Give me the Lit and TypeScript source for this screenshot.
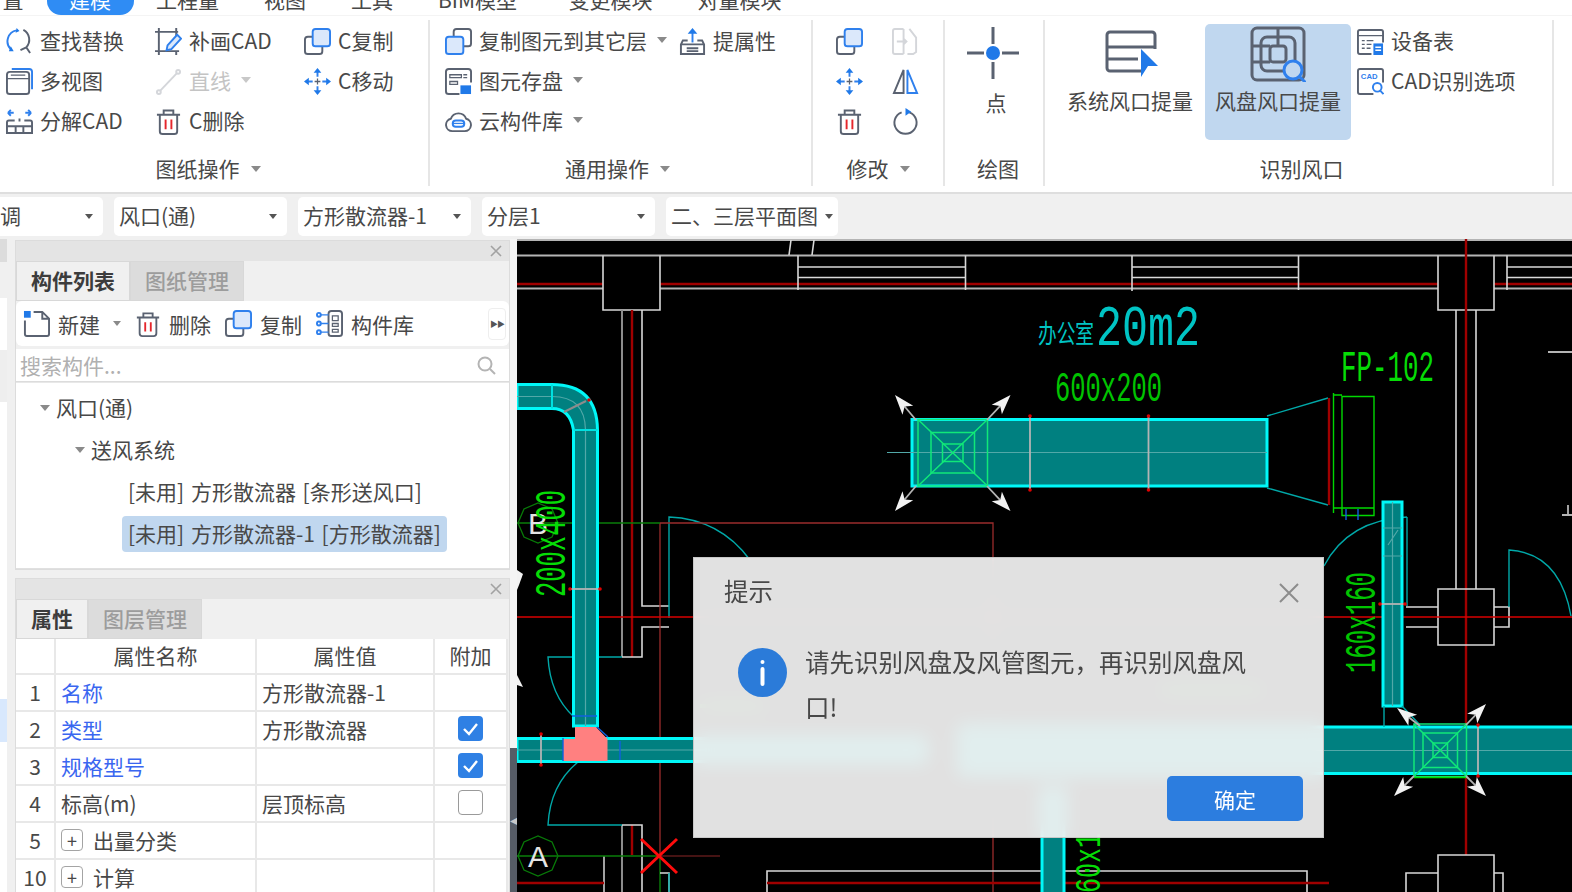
import { LitElement, html, svg, css, TemplateResult } from "lit";
import { customElement } from "lit/decorators.js";
import { classMap } from "lit/directives/class-map.js";

const moveArrows = svg`
  <path class="d thin" d="M14 11v6M11 14h6"/>
  <path class="b" d="M14 4v5M14 19v5M4 14h5M19 14h5"/>
  <path class="bf" d="M14 0l4 5h-8zM14 28l4-5h-8zM0 14l5-4v8zM28 14l-5-4v8z"/>`;

const copyFront = svg`
  <rect class="d" x="1" y="9" width="18" height="18" rx="3"/>
  <rect class="b lf" x="9" y="1" width="18" height="18" rx="3"/>`;

const trash = svg`
  <path class="d" d="M2 7h24M9 7V2.5h10V7M5 7v17a3 3 0 0 0 3 3h12a3 3 0 0 0 3-3V7"/>
  <path class="r" d="M11 12v10M17 12v10"/>`;

const ICONS: Record<string, TemplateResult> = {
  find: svg`
    <path class="b" d="M11 2.5A11.5 11.5 0 0 0 5 22"/>
    <path class="bf" d="M11 0l3 3-4 2zM3 24l5 0-3-5z"/>
    <path class="d" d="M18 2a11.5 11.5 0 0 1 3 18l4 6M21 20l-6 3"/>`,
  patch: svg`
    <path class="d" d="M4 0v28M0 4h24M0 24h25M22 0v9M22 24v4"/>
    <path class="b lf" d="M13 18l10-11 4 4-10 11-5 1z"/>`,
  copy: copyFront,
  layer: svg`
    <rect class="d" x="9" y="1" width="18" height="18" rx="3"/>
    <rect class="b lf" x="1" y="9" width="18" height="18" rx="3"/>`,
  views: svg`
    <rect class="d" x="1" y="4" width="23" height="23" rx="3"/>
    <path class="d thin" d="M1 11h23M5 7.5h15"/>
    <path class="b" d="M6 1h18a3 3 0 0 1 3 3v18"/>`,
  line: svg`
    <path class="g" d="M5 24L23 5"/>
    <circle class="g" cx="4" cy="25" r="2"/><circle class="g" cx="24" cy="4" r="2"/>`,
  move: moveArrows,
  explode: svg`
    <path class="b" d="M2 5h6M2 5l3-3M2 5l3 3M26 5h-6M26 5l-3-3M26 5l-3 3"/>
    <path class="d" d="M9 13H3a2 2 0 0 0-2 2v11h26V15a2 2 0 0 0-2-2h-6M1 19h26M10 19v7M18 19v7M14 11v3"/>`,
  trash,
  save: svg`
    <path class="d" d="M15 27H4a3 3 0 0 1-3-3V4a3 3 0 0 1 3-3h20a3 3 0 0 1 3 3v11"/>
    <path class="d thin" d="M5 7h12v3H5zM5 14h8v3H5zM19 7h4M19 10h4"/>
    <path class="bf" d="M16 18h11v9H16z"/>`,
  cloud: svg`
    <path class="d" d="M7.5 24a6.5 6.5 0 0 1-1.5-12.8 8.5 8.5 0 0 1 16 0A6.5 6.5 0 0 1 20.500 24z"/>
    <rect class="b" x="8" y="13" width="12" height="6.500" rx="3.200"/>
    <path class="b thin" d="M8 16h12"/>`,
  attr: svg`
    <path class="d" d="M9 13H4l-2 4v10h24V17l-2-4h-5M2 17h24M8 21h12M8 24h12"/>
    <path class="b" d="M14 4v11"/><path class="bf" d="M14 0l5 6H9z"/>`,
  flip: svg`
    <path class="g" d="M12 27H3a2 2 0 0 1-2-2V3a2 2 0 0 1 2-2h9M18 1l7 9v15l-3 2h-6M12 1v26M5 14h10M12 11l3 3-3 3"/>`,
  mirror: svg`
    <path class="d" d="M12 2L2 26h10z"/>
    <path class="b" d="M16 2l10 24H16z"/>`,
  rotate: svg`
    <path class="d" d="M18 4.500a11.500 11.500 0 1 1-8 0"/>
    <path class="bf" d="M14 0l6 4-6 4z"/>`,
  table: svg`
    <path class="d" d="M15 27H3a2 2 0 0 1-2-2V4a2 2 0 0 1 2-2h22a2 2 0 0 1 2 2v11"/>
    <path class="d thin" d="M1 8h26M5 13h3M10 13h7M5 17h3M10 17h5M5 21h3M10 21h4"/>
    <path class="bf" d="M17 16h10v12H17z"/>
    <path class="wl" d="M19 20h6M19 23h6"/>`,
  cadq: svg`
    <path class="d" d="M17 27H3a2 2 0 0 1-2-2V3a2 2 0 0 1 2-2h22a2 2 0 0 1 2 2v12"/>
    <text class="cad" x="4" y="11">CAD</text>
    <circle class="b" cx="21" cy="20" r="4.500"/><path class="b" d="M24 23.500l3.500 3.500"/>`,
  new: svg`
    <path class="d" d="M11 2h9l7 7v16a2 2 0 0 1-2 2H4a2 2 0 0 1-2-2V11M20 2v7h7"/>
    <path class="bf" d="M1 1h7v7H1z"/>`,
  lib: svg`
    <rect class="d" x="13" y="1" width="14" height="26" rx="3"/>
    <path class="d thin" d="M17 6h6v5h-6zM17 14h6v3h-6zM17 20h6v3h-6z"/>
    <path class="b thin" d="M4 5h9M4 14h9M4 23h9"/>
    <circle class="b" cx="3" cy="5" r="2"/><circle class="b" cx="3" cy="14" r="2"/><circle class="b" cx="3" cy="23" r="2"/>`,
};

const BIG_ICONS: Record<string, TemplateResult> = {
  point: svg`
    <path class="d wide" d="M27 1v17M27 36v17M1 27h17M36 27h17"/>
    <circle class="bf" cx="27" cy="27" r="7"/>`,
  sys: svg`
    <path class="d wide" d="M53 23V9a3 3 0 0 0-3-3H8a3 3 0 0 0-3 3v33a3 3 0 0 0 3 3h31M5 21h48M5 33h31"/>
    <path class="bf" d="M39 23l17 17H46l-7 11z"/>`,
  fan: svg`
    <rect class="d wide" x="2" y="2" width="52" height="52" rx="5"/>
    <rect class="d wide" x="11" y="11" width="34" height="34" rx="6"/>
    <rect class="d wide" x="20" y="20" width="16" height="16" rx="3"/>
    <path class="d wide" d="M2 20h18M28 2v18M2 36h18"/>
    <circle class="b wide act" cx="43" cy="44" r="9"/>
    <path class="b wide" d="M50 51l6 6"/>`,
};

const canvasText = (x: number, y: number, len: number, size: number, cls: string, text: string, rot = false) =>
  svg`<text class=${cls} x=${x} y=${y} font-size=${size} textLength=${len} lengthAdjust="spacingAndGlyphs"
    transform=${rot ? `rotate(-90 ${x} ${y})` : ""}>${text}</text>`;

// air outlet arrow: shaft from duct corner, white notched head at the tip
const arrow = (x: number, y: number, tx: number, ty: number) => {
  const a = Math.atan2(ty - y, tx - x);
  const c = Math.cos(a);
  const s = Math.sin(a);
  const bx = tx - c * 20;
  const by = ty - s * 20;
  const nx = tx - c * 15;
  const ny = ty - s * 15;
  return svg`
    <line class="wall" x1=${x} y1=${y} x2=${nx} y2=${ny}/>
    <polygon class="head" points="${tx},${ty} ${bx - s * 7},${by + c * 7} ${nx},${ny} ${bx + s * 7},${by - c * 7}"/>`;
};

const diffuser = (x0: number, y0: number, x1: number, y1: number, m: number, n: number) => {
  const w = x1 - x0;
  const h = y1 - y0;
  return svg`
    <rect class="fan" x=${x0} y=${y0} width=${w} height=${h}/>
    <rect class="fan" x=${x0 + m} y=${y0 + m} width=${w - 2 * m} height=${h - 2 * m}/>
    <rect class="fan" x=${x0 + n} y=${y0 + n} width=${w - 2 * n} height=${h - 2 * n}/>
    <path class="fan" d="M${x0} ${y0}L${x1} ${y1}M${x1} ${y0}L${x0} ${y1}"/>`;
};

const tick = (x: number, y0: number, y1: number) => svg`
  <line class="wall" x1=${x} y1=${y0} x2=${x} y2=${y1}/>
  <circle class="dot" cx=${x} cy=${y0} r="1.800"/><circle class="dot" cx=${x} cy=${y1} r="1.800"/>`;

const hexAxis = (cx: number, cy: number, label: string, dx: number) => svg`
  <polygon class="axis" points="${cx - 20},${cy} ${cx - 14},${cy - 14} ${cx},${cy - 20} ${cx + 14},${cy - 14} ${cx + 20},${cy} ${cx + 14},${cy + 14} ${cx},${cy + 20} ${cx - 14},${cy + 14}"/>
  <text class="axis-label" x=${cx + dx} y=${cy + 11}>${label}</text>`;

@customElement("cad-drawing")
export class CadDrawing extends LitElement {
  static styles = css`
    :host {
      display: block;
      width: 1055px;
      height: 653px;
      background: #000;
    }
    svg {
      display: block;
    }
    .wall {
      stroke: #b4b4b4;
      stroke-width: 1.8;
      fill: none;
    }
    .white {
      stroke: #d8d8d8;
      stroke-width: 1.6;
      fill: none;
    }
    .grey {
      stroke: #8c8c8c;
      stroke-width: 2;
      fill: none;
    }
    .red {
      stroke: #a00000;
      stroke-width: 2.4;
      fill: none;
    }
    .thin-red {
      stroke: #d80000;
      stroke-width: 1.3;
      fill: none;
    }
    .brown {
      stroke: #9a2c2c;
      stroke-width: 1.3;
      fill: none;
    }
    .maroon {
      stroke: #5c1a1a;
      stroke-width: 1.6;
      fill: none;
    }
    .green-line {
      stroke: #0a7d0a;
      stroke-width: 1.4;
      fill: none;
    }
    .door {
      stroke: #00a8a8;
      stroke-width: 1.4;
      fill: none;
    }
    .duct {
      stroke: #00f8f8;
      stroke-width: 3;
      fill: #008080;
    }
    .duct-thin {
      stroke: #00e0e0;
      stroke-width: 2;
      fill: none;
    }
    .center {
      stroke: #52a8a8;
      stroke-width: 1.2;
      fill: none;
    }
    .fan {
      stroke: #10e878;
      stroke-width: 1.5;
      fill: none;
    }
    .unit {
      stroke: #00d800;
      stroke-width: 1.4;
      fill: none;
    }
    .unit-b {
      stroke: #1060e0;
      stroke-width: 1.4;
    }
    .pink {
      fill: #ff8080;
    }
    .head {
      fill: #f2f2f2;
    }
    .dot {
      fill: #e00000;
    }
    .cross {
      stroke: #ff0c0c;
      stroke-width: 3;
    }
    .axis {
      stroke: #087a08;
      stroke-width: 1.3;
      fill: none;
    }
    .axis-label {
      fill: #e4e4e4;
      font: 400 30px "Liberation Sans", sans-serif;
    }
    .t-green,
    .t-lime,
    .t-cyan {
      font-family: "Liberation Mono", monospace;
      font-weight: 400;
    }
    .t-green {
      fill: #00c400;
    }
    .t-lime {
      fill: #06dc06;
    }
    .t-cyan {
      fill: #00c4c4;
    }
    .t-cyan-cjk {
      fill: #00c4c4;
      font-family: "Noto Sans CJK SC", sans-serif;
    }
    .lit-green {
      stroke: #00c400;
      stroke-width: 4;
      fill: none;
    }
  `;

  protected render(): TemplateResult {
    return html`
      <svg width="1055" height="653" viewBox="517 239 1055 653">
        <path class="wall" d="M517 240H1572"/>
        <path class="wall" d="M517 255.500H1572M517 288.500H603M660 288.500H1438M1494 288.500H1572"/>
        <path class="red" d="M517 284H603M660 284H1438M1494 284H1572"/>
        <path class="white" d="M789 255L791 240M812 255L814 240"/>

        <path class="white" d="M603 255.500V310H660V255.500M1438 255.500V310H1494V255.500"/>
        <path class="white" d="M798 255.500V290M965.500 255.500V290M1132 255.500V291M1298.500 255.500V290M1507 255.500V290"/>
        <path class="white" d="M798 267H965.500M798 277.500H965.500M1132 267H1298.500M1132 277.500H1298.500M1507 267H1572M1507 277.500H1572"/>

        <path class="grey" d="M622 310V657M622 825V892"/>
        <path class="red" d="M632 310V657M632 825V855"/>
        <path class="white" d="M642 310V606H669M669 627H642V657H622M622 825H642V892"/>
        <path class="wall" d="M604 856V892"/>
        <path class="red" d="M517 883H604"/>

        <path class="white" d="M1456 310V589M1476 310V589"/>
        <path class="red" d="M1466 239V855"/>
        <path class="white" d="M1438 589H1494V645H1438ZM1438 607H1406M1406 627H1438M1494 607H1509V627H1494"/>
        <path class="white" d="M1438 892V855H1494V892M1438 873H1406V892M1494 873H1503V892"/>

        <path class="wall" d="M1548 352H1572M1568 505V515M1562 515H1572"/>
        <path class="door" d="M1407 517V606M1407 517Q1348 520 1324 566M1509 607V550Q1560 553 1571 616"/>
        <path class="door" d="M669 618V517Q720 519 750 560"/>
        <path class="door" d="M622 657H548Q550 695 574 717M578 762Q550 785 548 825H622"/>

        <path class="brown" d="M660 523H993V892M660 523V627M660 627V856"/>
        <path class="thin-red" d="M517 617H669M669 617H1572"/>
        <path class="green-line" d="M517 523H660M517 856H659M660 856V892"/>
        <path class="maroon" d="M660 856H720"/>
        <path class="white" d="M660 873H669V892"/>
        <path class="door" d="M669 873V892"/>
        <path class="white" d="M767 892V871H1307V892"/>
        <path class="red" d="M767 883H1329"/>

        <path class="duct" d="M517 384.500H552Q597 384.500 597.500 430V726H573.500V430Q570 408.500 552 408.500H517Z"/>
        <path class="center" d="M517 396.500H552Q585 396.500 585.500 430V726"/>
        <path class="duct-thin" d="M552 384.500V408.500M573.500 430H597.500"/>
        <path class="grey" d="M564 412L586 401"/>
        <circle class="dot" cx="589" cy="400" r="1.800"/>
        <line class="wall" x1="570" y1="589" x2="600" y2="589"/>
        <circle class="dot" cx="570" cy="589" r="1.800"/><circle class="dot" cx="600" cy="589" r="1.800"/>

        <path class="duct" d="M517 738.500H925V761.500H517Z"/>
        <path class="center" d="M517 750H925"/>
        ${tick(541, 734, 765)}
        <path class="duct" d="M960 727H1574V773.500H960Z"/>
        <path class="center" d="M960 750.500H1574"/>
        <path class="duct" d="M1042 790H1064V895H1042Z"/>
        <path class="pink" d="M575 727H596L607.500 739V761H563V739H575Z"/>
        <path class="unit-b" d="M572 716H597M597 727L608 737M620 741V760M563 738V761" fill="none"/>

        <path class="duct" d="M912 419.500H1267V486H912Z"/>
        <path class="center" d="M887 452.500H1267"/>
        ${tick(1030, 416, 490)} ${tick(1148.5, 416, 490)}
        ${diffuser(918, 419.500, 987.500, 486, 13, 24.500)}
        ${arrow(916, 420, 895, 395)} ${arrow(987, 420, 1010.500, 395)}
        ${arrow(916, 486, 895, 511)} ${arrow(987, 486, 1010.500, 511)}

        <path class="door" d="M1267 416L1328 398M1267 488L1328 505"/>
        <path class="red" d="M1329 398V505"/>
        <path class="unit" d="M1333.500 393V513M1333.500 395H1342M1342 396.500H1374V515.500H1342ZM1333.500 508H1374"/>
        <path class="unit-b" d="M1346 509V520M1358 509V520"/>

        <path class="duct" d="M1383 502H1402V706H1383Z"/>
        <path class="center" d="M1392.500 502V706M1383 528H1402M1383 556H1402M1388 545L1398 530"/>
        <line class="wall" x1="1380" y1="604" x2="1405" y2="604"/>
        <circle class="dot" cx="1380" cy="604" r="1.800"/>
        <circle class="dot" cx="1405" cy="604" r="1.800"/>
        <path class="door" d="M1384 706V727M1402 706L1420 725"/>

        ${diffuser(1414, 724, 1466.500, 776.500, 9, 19)}
        <path class="unit" d="M1414 777.500H1466.500"/>
        ${tick(1478, 725, 776)}
        ${arrow(1420, 726, 1397, 708)} ${arrow(1466, 725, 1486, 704)}
        ${arrow(1414, 776, 1394, 796)} ${arrow(1466, 776, 1486, 796)}

        <path class="cross" d="M641 839L677 873M677 839L641 873"/>
        ${hexAxis(538, 523, "B", -10)} ${hexAxis(538, 856, "A", -10)}

        <polygon class="head" points="517,570 523,574 519,585 517,590"/>
        <polygon class="head" points="517,675 523,687 517,685"/>

        ${canvasText(1038, 343, 56, 26, "t-cyan-cjk", "办公室")}
        ${canvasText(1096, 345, 104, 58, "t-cyan", "20m2")}
        ${canvasText(1055, 401, 107, 42, "t-green", "600x200")}
        ${canvasText(1341, 381, 93, 44, "t-lime", "FP-102")}
        ${canvasText(565, 597, 107, 44, "t-lime", "200x400", true)}
        ${canvasText(1375, 673, 101, 44, "t-green", "160x160", true)}
        ${canvasText(1100, 893, 60, 36, "t-lime", "60x1", true)}

        <path class="lit-green" d="M700 706H765M1160 690H1262"/>
      </svg>
    `;
  }
}

interface ToolItem {
  icon: string;
  label?: string;
  caret?: boolean;
  off?: boolean;
}

interface PropRow {
  no: number;
  name: string;
  link?: boolean;
  value?: string;
  check?: boolean;
  expand?: boolean;
}

const MENU = ["置", "建模", "工程量", "视图", "工具", "BIM模型", "变更模块", "对量模块"];

const DRAWING_TOOLS: (ToolItem | null)[] = [
  { icon: "find", label: "查找替换" },
  { icon: "patch", label: "补画CAD" },
  { icon: "copy", label: "C复制" },
  { icon: "views", label: "多视图" },
  { icon: "line", label: "直线", caret: true, off: true },
  { icon: "move", label: "C移动" },
  { icon: "explode", label: "分解CAD" },
  { icon: "trash", label: "C删除" },
];

const COMMON_TOOLS: ToolItem[] = [
  { icon: "layer", label: "复制图元到其它层", caret: true },
  { icon: "attr", label: "提属性" },
  { icon: "save", label: "图元存盘", caret: true },
  { icon: "cloud", label: "云构件库", caret: true },
];

const EDIT_TOOLS: ToolItem[] = [
  { icon: "copy" },
  { icon: "flip" },
  { icon: "move" },
  { icon: "mirror" },
  { icon: "trash" },
  { icon: "rotate" },
];

const SELECTS = [
  { label: "调", cls: "s0" },
  { label: "风口(通)", cls: "s1" },
  { label: "方形散流器-1", cls: "s1" },
  { label: "分层1", cls: "s1" },
  { label: "二、三层平面图", cls: "s2" },
];

const PROPS: PropRow[] = [
  { no: 1, name: "名称", link: true, value: "方形散流器-1" },
  { no: 2, name: "类型", link: true, value: "方形散流器", check: true },
  { no: 3, name: "规格型号", link: true, check: true },
  { no: 4, name: "标高(m)", value: "层顶标高", check: false },
  { no: 5, name: "出量分类", expand: true },
  { no: 10, name: "计算", expand: true },
];

const closeIcon = html`<svg class="x" width="12" height="12" viewBox="0 0 12 12"><path d="M1 1l10 10M11 1L1 11"/></svg>`;
const caret = html`<i class="caret"></i>`;

@customElement("app-root")
export class AppRoot extends LitElement {
  static styles = css`
    :host {
      display: block;
      width: 1572px;
      height: 892px;
      overflow: hidden;
      background: #f0f0f0;
      color: #484848;
      font: 400 21px "Noto Sans CJK SC", "Noto Sans", sans-serif;
      filter: blur(0.45px);
    }
    * {
      box-sizing: border-box;
    }
    .d,
    .b,
    .r,
    .g,
    .wl {
      fill: none;
      stroke-width: 2;
    }
    .d {
      stroke: #5a6271;
    }
    .b {
      stroke: #2f80ed;
    }
    .r {
      stroke: #e5262c;
    }
    .g {
      stroke: #d4d6da;
    }
    .wl {
      stroke: #fff;
      stroke-width: 1.5;
    }
    .thin {
      stroke-width: 1.3;
    }
    .wide {
      stroke-width: 3;
    }
    .lf {
      fill: #dbe8fb;
    }
    .act {
      fill: #c0d7ef;
    }
    .bf {
      fill: #2079e8;
    }
    .cad {
      fill: #2f80ed;
      font: 700 8px "Liberation Sans", sans-serif;
    }
    .menu {
      display: flex;
      height: 15px;
      margin-left: -20px;
      overflow: hidden;
      background: #fff;
    }
    .menu-item {
      height: 32px;
      margin-top: -17px;
      padding: 0 22.5px;
      line-height: 32px;
      white-space: nowrap;
      flex: none;
    }
    .menu-item.on {
      margin-left: 0.5px;
      background: #2f8cf4;
      border-radius: 14px;
      color: #fff;
    }
    .menu-item.latin {
      padding-right: 29px;
    }
    .ribbon {
      display: flex;
      height: 179px;
      padding-top: 4px;
      background: #fff;
      border-top: 1px solid #f4f4f4;
      border-bottom: 2px solid #dedede;
      overflow: hidden;
    }
    .group {
      display: flex;
      flex-direction: column;
      flex: none;
      height: 166px;
      border-right: 2px solid #e6e6e6;
    }
    .g1 {
      width: 442px;
      margin-left: -12px;
    }
    .g2 {
      width: 383px;
    }
    .g3 {
      width: 132px;
    }
    .g4 {
      width: 100px;
    }
    .g5 {
      width: 509px;
    }
    .body {
      flex: 1;
      min-height: 0;
    }
    .g1 .body {
      display: grid;
      grid-template-columns: repeat(3, 149px);
      grid-auto-rows: 40px;
      padding-left: 18px;
    }
    .g2 .body {
      display: grid;
      grid-template-columns: 234px auto;
      grid-auto-rows: 40px;
      padding-left: 15px;
    }
    .g3 .body {
      display: grid;
      grid-template-columns: 56px 56px;
      grid-auto-rows: 40px;
      padding-left: 23px;
    }
    .g4 .body {
      display: flex;
      flex-direction: column;
      align-items: center;
      padding-top: 6px;
    }
    .g5 .body {
      display: flex;
      gap: 2px;
      padding: 4px 0 0 12px;
    }
    .tool {
      display: flex;
      align-items: center;
      gap: 7px;
      height: 40px;
      white-space: nowrap;
    }
    .tool svg {
      flex: none;
      margin-top: 2px;
    }
    .tool.off {
      color: #c4c4c4;
    }
    .caret {
      display: inline-block;
      flex: none;
      width: 0;
      height: 0;
      margin-left: 3px;
      border-left: 5px solid transparent;
      border-right: 5px solid transparent;
      border-top: 6px solid #8a8a8a;
    }
    .tool.off .caret {
      border-top-color: #c8c8c8;
    }
    .label {
      flex: none;
      display: flex;
      align-items: center;
      justify-content: center;
      height: 32px;
      padding-bottom: 5px;
      white-space: nowrap;
    }
    .label .caret {
      margin: 3px 0 0 11px;
    }
    .g2 .label {
      padding-right: 6px;
    }
    .g4 .label {
      padding-left: 8px;
    }
    .g5 .label {
      padding-left: 6px;
    }
    .big {
      display: flex;
      flex-direction: column;
      align-items: center;
      width: 146px;
      height: 116px;
      padding-top: 2px;
      border-radius: 5px;
      white-space: nowrap;
    }
    .big.on {
      background: #c0d7ef;
    }
    .big span {
      margin-top: 3px;
      line-height: 30px;
    }
    .point-text {
      line-height: 30px;
      margin: 5px 0 0 4px;
    }
    .col {
      display: flex;
      flex-direction: column;
      margin: -4px 0 0 4px;
    }
    .selects {
      display: flex;
      align-items: center;
      gap: 11px;
      height: 45px;
      background: #f0f0f0;
    }
    .select {
      display: flex;
      align-items: center;
      justify-content: space-between;
      flex: none;
      height: 39px;
      padding: 0 10px 0 5px;
      background: #fff;
      border-radius: 5px;
      white-space: nowrap;
    }
    .select span {
      margin-bottom: 4px;
    }
    .select .caret {
      border-left-width: 4px;
      border-right-width: 4px;
      border-top: 5px solid #555;
    }
    .s0 {
      width: 103px;
      padding-left: 0;
      border-radius: 0 5px 5px 0;
    }
    .s1 {
      width: 173px;
    }
    .s2 {
      padding: 0 5px;
      width: 172px;
    }
    .s2 .caret {
      margin-left: -4px;
    }
    .main {
      display: flex;
      height: 653px;
    }
    .rail {
      display: flex;
      flex-direction: column;
      flex: none;
      width: 7px;
      margin-right: 8px;
      background: #fff;
    }
    .rail i {
      display: block;
    }
    .rail-a {
      height: 23px;
      background: #dcdcdc;
    }
    .rail-b {
      height: 36px;
      background: #f0f0f0;
    }
    .rail-c {
      height: 49px;
    }
    .rail-d {
      height: 52px;
      margin-top: 3px;
      background: #eee;
    }
    .rail-e {
      height: 297px;
    }
    .rail-f {
      height: 43px;
      background: #d8e8fd;
    }
    .panels {
      display: flex;
      flex-direction: column;
      flex: none;
      gap: 8px;
      width: 495px;
      padding-top: 1px;
    }
    .panel {
      display: flex;
      flex-direction: column;
      border: 1px solid #dcdcdc;
      background: #f0f0f0;
    }
    .panel.top {
      height: 330px;
    }
    .panel.bottom {
      flex: 1;
      min-height: 0;
      border-bottom: 0;
      overflow: hidden;
    }
    .title {
      display: flex;
      align-items: center;
      justify-content: flex-end;
      flex: none;
      height: 20px;
      padding-right: 7px;
      background: #e4e4e4;
    }
    .x {
      fill: none;
      stroke: #a2a2a2;
      stroke-width: 1.6;
    }
    .tabs {
      display: flex;
      flex: none;
      height: 40px;
    }
    .tab {
      display: flex;
      align-items: center;
      justify-content: center;
      height: 40px;
      padding: 0 14px 2px;
      border: 1px solid #d8d8d8;
      background: #dcdcdc;
      color: #9c9c9c;
      font-weight: 500;
    }
    .tab.on {
      background: #f0f0f0;
      color: #3c3c3c;
      font-weight: 700;
    }
    .actions {
      display: flex;
      align-items: center;
      flex: none;
      height: 45px;
      padding: 0 3px 0 7px;
      background: #fff;
      border-radius: 6px;
      white-space: nowrap;
    }
    .action {
      display: flex;
      align-items: center;
      gap: 8px;
      margin-right: 14px;
    }
    .action .caret {
      margin-left: 5px;
      border-left-width: 4px;
      border-right-width: 4px;
      border-top-width: 5px;
    }
    .more {
      display: flex;
      align-items: center;
      justify-content: center;
      width: 18px;
      height: 32px;
      margin-left: auto;
      border: 1px solid #eee;
      border-radius: 4px;
      font-size: 8px;
      letter-spacing: -1px;
      color: #555;
    }
    .search {
      display: flex;
      align-items: center;
      justify-content: space-between;
      flex: none;
      height: 33px;
      margin-top: 3px;
      padding: 0 13px 0 4px;
      background: #fff;
      border-bottom: 1px solid #dcdcdc;
      color: #b0b0b0;
    }
    .search circle,
    .search path {
      fill: none;
      stroke: #b4b4b4;
      stroke-width: 2;
    }
    .tree {
      flex: 1;
      padding-top: 4px;
      background: #fff;
      border-top: 1px solid #e8e8e8;
      border-bottom: 1px solid #e0e0e0;
    }
    .node {
      display: flex;
      align-items: center;
      height: 42px;
      white-space: nowrap;
    }
    .node .caret {
      margin: 0 6px 0 0;
    }
    .l1 {
      padding-left: 24px;
    }
    .l2 {
      padding-left: 59px;
    }
    .l3 {
      padding-left: 106px;
    }
    .node span {
      display: block;
      height: 36px;
      line-height: 34px;
      border-radius: 4px;
    }
    .l3 span {
      padding: 0 6px;
      word-spacing: 2px;
    }
    .node .sel {
      background: #c0d7ef;
    }
    .props {
      flex: 1;
      width: 492px;
      background: #fff;
    }
    .row {
      display: grid;
      grid-template-columns: 40px 201px 178px 73px;
      height: 37px;
      border-bottom: 2px solid #e8e8e8;
    }
    .row.head {
      height: 36px;
    }
    .cell {
      display: flex;
      align-items: center;
      padding: 0 0 2px 5px;
      border-right: 2px solid #e8e8e8;
      white-space: nowrap;
    }
    .cell.mid {
      justify-content: center;
      padding-left: 0;
    }
    .link {
      color: #3a66f0;
    }
    .check {
      display: flex;
      align-items: center;
      justify-content: center;
      width: 25px;
      height: 25px;
      background: #2f80e4;
      border-radius: 4px;
    }
    .check path {
      fill: none;
      stroke: #fff;
      stroke-width: 2.4;
    }
    .check.empty {
      background: #fff;
      border: 1.5px solid #9a9a9a;
    }
    .plus {
      display: flex;
      align-items: center;
      justify-content: center;
      flex: none;
      width: 22px;
      height: 22px;
      margin-right: 10px;
      border: 1.5px solid #a4a4a4;
      border-radius: 4px;
      font-size: 18px;
      font-style: normal;
      line-height: 1;
    }
    .splitter {
      display: flex;
      flex-direction: column;
      flex: none;
      width: 7px;
    }
    .splitter i {
      flex: none;
      height: 509px;
      background: #f4f4f4;
    }
    .splitter b {
      flex: 1;
      display: flex;
      align-items: center;
      background: #565c66;
      color: #c8c8c8;
      font: 400 10px "Liberation Sans", sans-serif;
    }
    .stage {
      position: relative;
      flex: none;
      width: 1055px;
      height: 653px;
      overflow: hidden;
    }
    .dialog {
      position: absolute;
      left: 176px;
      top: 318px;
      display: flex;
      flex-direction: column;
      width: 631px;
      height: 281px;
      padding: 17px 20px 16px 30px;
      background: rgba(250, 250, 250, 0.9);
      -webkit-backdrop-filter: blur(9px);
      backdrop-filter: blur(9px);
      border: 1px solid #c8c8c8;
    }
    .dialog-title {
      display: flex;
      align-items: center;
      justify-content: space-between;
      height: 36px;
      padding-right: 4px;
      font-size: 24.5px;
    }
    .dialog-title span {
      margin-bottom: 5px;
    }
    .dialog-title .x {
      stroke: #8c8c8c;
      stroke-width: 2;
    }
    .dialog-body {
      display: flex;
      flex: 1;
      align-items: flex-start;
      padding: 28px 0 0 14px;
    }
    .info {
      flex: none;
      width: 49px;
      height: 49px;
      margin: 9px 18px 0 0;
    }
    .info circle {
      fill: #2b7bd9;
    }
    .info rect {
      fill: #fff;
    }
    .msg {
      width: 452px;
      font-size: 24.5px;
      line-height: 45px;
    }
    .dialog-foot {
      display: flex;
      justify-content: flex-end;
    }
    .ok {
      display: flex;
      align-items: center;
      justify-content: center;
      width: 136px;
      height: 45px;
      background: #2c7ddf;
      border-radius: 5px;
      color: #fff;
    }
  `;

  private icon(name: string, size = 27): TemplateResult {
    return html`<svg width=${size} height=${size} viewBox="0 0 28 28">${ICONS[name]}</svg>`;
  }

  private bigIcon(name: string): TemplateResult {
    return html`<svg width="56" height="56" viewBox="0 0 56 56">${BIG_ICONS[name]}</svg>`;
  }

  private tool(t: ToolItem | null): TemplateResult {
    if (!t) return html`<div></div>`;
    return html`
      <div class=${classMap({ tool: true, off: !!t.off })}>
        ${this.icon(t.icon)} ${t.label ? html`<span>${t.label}</span>` : ""}
        ${t.caret ? caret : ""}
      </div>
    `;
  }

  private propRow(p: PropRow): TemplateResult {
    return html`
      <div class="row">
        <div class="cell mid">${p.no}</div>
        <div class=${classMap({ cell: true, link: !!p.link })}>
          ${p.expand ? html`<i class="plus">+</i>` : ""}${p.name}
        </div>
        <div class="cell">${p.value ?? ""}</div>
        <div class="cell mid">
          ${p.check === undefined
            ? ""
            : p.check
              ? html`<div class="check">
                  <svg width="17" height="14" viewBox="0 0 17 14"><path d="M2 7l5 5 8-10"/></svg>
                </div>`
              : html`<div class="check empty"></div>`}
        </div>
      </div>
    `;
  }

  protected render(): TemplateResult {
    return html`
      <div class="menu">
        ${MENU.map(
          (m) => html`<div class=${classMap({ "menu-item": true, on: m === "建模", latin: m === "BIM模型" })}>${m}</div>`,
        )}
      </div>

      <div class="ribbon">
        <section class="group g1">
          <div class="body">${DRAWING_TOOLS.map((t) => this.tool(t))}</div>
          <div class="label">图纸操作${caret}</div>
        </section>
        <section class="group g2">
          <div class="body">
            ${this.tool(COMMON_TOOLS[0])} ${this.tool(COMMON_TOOLS[1])}
            ${this.tool(COMMON_TOOLS[2])} ${this.tool(null)} ${this.tool(COMMON_TOOLS[3])}
          </div>
          <div class="label">通用操作${caret}</div>
        </section>
        <section class="group g3">
          <div class="body">${EDIT_TOOLS.map((t) => this.tool(t))}</div>
          <div class="label">修改${caret}</div>
        </section>
        <section class="group g4">
          <div class="body">
            ${this.bigIcon("point")}
            <span class="point-text">点</span>
          </div>
          <div class="label">绘图</div>
        </section>
        <section class="group g5">
          <div class="body">
            <div class="big">${this.bigIcon("sys")}<span>系统风口提量</span></div>
            <div class="big on">${this.bigIcon("fan")}<span>风盘风口提量</span></div>
            <div class="col">
              ${this.tool({ icon: "table", label: "设备表" })}
              ${this.tool({ icon: "cadq", label: "CAD识别选项" })}
            </div>
          </div>
          <div class="label">识别风口</div>
        </section>
      </div>

      <div class="selects">
        ${SELECTS.map(
          (s) => html`<div class="select ${s.cls}"><span>${s.label}</span>${caret}</div>`,
        )}
      </div>

      <div class="main">
        <div class="rail">
          <i class="rail-a"></i><i class="rail-b"></i><i class="rail-c"></i><i class="rail-d"></i>
          <i class="rail-e"></i><i class="rail-f"></i>
        </div>
        <div class="panels">
          <div class="panel top">
            <div class="title">${closeIcon}</div>
            <div class="tabs">
              <div class="tab on">构件列表</div>
              <div class="tab">图纸管理</div>
            </div>
            <div class="actions">
              <div class="action">${this.icon("new")}<span>新建</span>${caret}</div>
              <div class="action">${this.icon("trash", 26)}<span>删除</span></div>
              <div class="action">${this.icon("copy")}<span>复制</span></div>
              <div class="action">${this.icon("lib")}<span>构件库</span></div>
              <div class="more">▶▶</div>
            </div>
            <div class="search">
              <span>搜索构件...</span>
              <svg width="19" height="19" viewBox="0 0 19 19"><circle cx="8" cy="8" r="6.500"/><path d="M13 13l5 5"/></svg>
            </div>
            <div class="tree">
              <div class="node l1">${caret}<span>风口(通)</span></div>
              <div class="node l2">${caret}<span>送风系统</span></div>
              <div class="node l3"><span>[未用] 方形散流器 [条形送风口]</span></div>
              <div class="node l3"><span class="sel">[未用] 方形散流器-1 [方形散流器]</span></div>
            </div>
          </div>
          <div class="panel bottom">
            <div class="title">${closeIcon}</div>
            <div class="tabs">
              <div class="tab on">属性</div>
              <div class="tab">图层管理</div>
            </div>
            <div class="props">
              <div class="row head">
                <div class="cell"></div>
                <div class="cell mid">属性名称</div>
                <div class="cell mid">属性值</div>
                <div class="cell mid">附加</div>
              </div>
              ${PROPS.map((p) => this.propRow(p))}
            </div>
          </div>
        </div>
        <div class="splitter"><i></i><b>◀</b></div>
        <div class="stage">
          <cad-drawing></cad-drawing>
          <div class="dialog">
            <div class="dialog-title">
              <span>提示</span>
              <svg class="x" width="20" height="20" viewBox="0 0 20 20"><path d="M1 1l18 18M19 1L1 19"/></svg>
            </div>
            <div class="dialog-body">
              <svg class="info" viewBox="0 0 49 49">
                <circle cx="24.500" cy="24.500" r="24.500"/>
                <rect x="22.500" y="12" width="4" height="4" rx="2"/>
                <rect x="22.500" y="19" width="4" height="19" rx="2"/>
              </svg>
              <div class="msg">请先识别风盘及风管图元，再识别风盘风口!</div>
            </div>
            <div class="dialog-foot"><div class="ok">确定</div></div>
          </div>
        </div>
      </div>
    `;
  }
}
